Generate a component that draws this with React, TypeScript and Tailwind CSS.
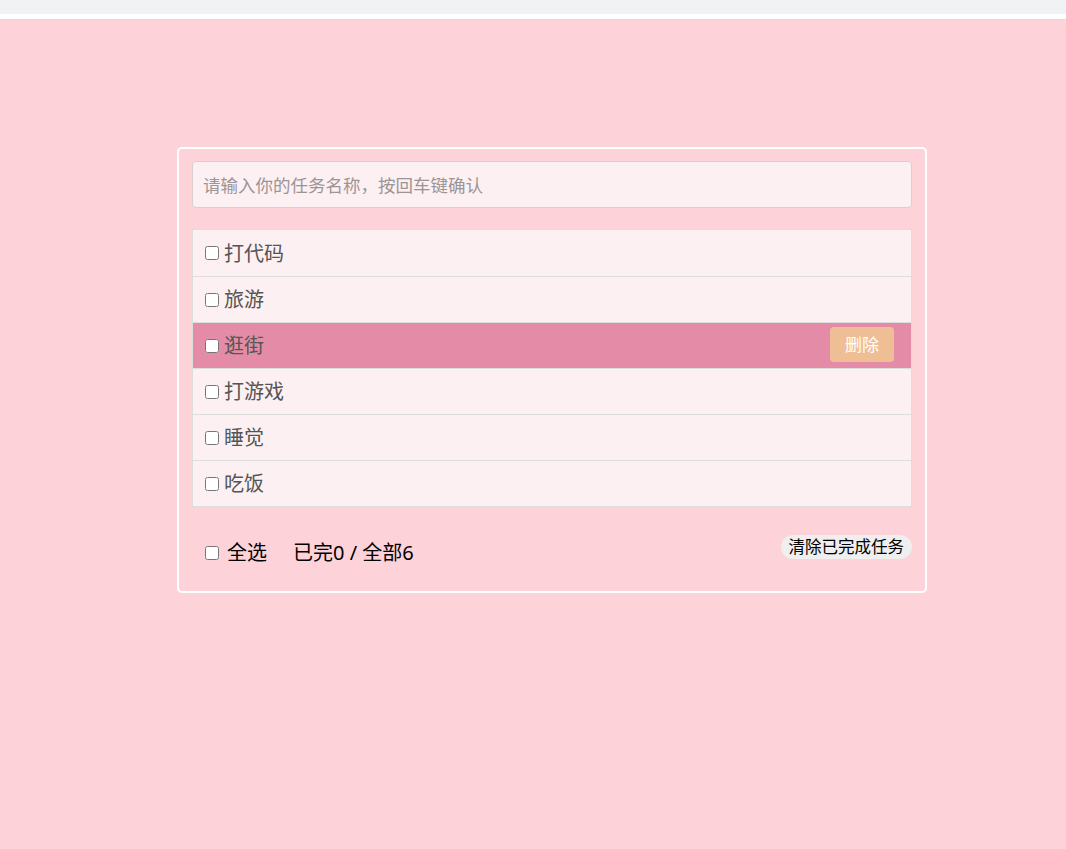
import { useState } from 'react';

const todos = ['打代码', '旅游', '逛街', '打游戏', '睡觉', '吃饭'];

export default function App() {
  const [hover, setHover] = useState(2);

  return (
    <div
      className="min-h-[849px] bg-[#fdd2d8]"
      style={{ fontFamily: '"Noto Sans", "Noto Sans CJK SC", sans-serif' }}
    >
      {/* browser bar */}
      <div className="h-[14px] bg-[#f1f2f4]" />
      <div className="h-[6px] bg-white border-b border-[#dcdcdc]" />

      <div className="pt-[127px] pl-[177px]">
        <div className="w-[750px] border-2 border-white rounded-[5px] px-[13px] pt-[12px] pb-[28px]">
          <input
            className="w-full h-[47px] bg-[#fcf0f2] border border-[#d9cfd2] rounded-[4px] px-[10px] text-[17.5px] text-[#555] placeholder:text-[#9d9496] outline-none"
            placeholder="请输入你的任务名称，按回车键确认"
          />

          <ul className="mt-[21px] border border-[#ddd] border-t-[#e6dadd]">
            {todos.map((t, i) => (
              <li
                key={t}
                onMouseEnter={() => setHover(i)}
                className={
                  'h-[46px] flex items-center pl-[12px] pr-[17px] ' +
                  (i > 0 ? 'border-t border-[#ddd] ' : '') +
                  (hover === i ? 'bg-[#e48ca7]' : 'bg-[#fcf0f2]')
                }
              >
                <input type="checkbox" className="w-[14px] h-[14px] m-0 mr-[5px]" />
                <span className="text-[20px] text-[#555] leading-none mt-[1px]">{t}</span>
                {hover === i && (
                  <button className="ml-auto -mt-[2px] h-[35px] w-[64px] bg-[#f0be94] rounded-[4px] text-white text-[17px] leading-none">
                    删除
                  </button>
                )}
              </li>
            ))}
          </ul>

          <div className="mt-[28px] flex items-start">
            <label className="flex items-center mt-[8px] pl-[13px] text-[20px] text-black leading-none">
              <input type="checkbox" className="w-[14px] h-[14px] m-0 mr-[8px]" />
              <span>全选</span>
              <span className="ml-[26px]">已完0 / 全部6</span>
            </label>
            <button className="ml-auto h-[24px] px-[8px] rounded-full bg-[#efefef] text-[16.5px] text-black leading-none">
              清除已完成任务
            </button>
          </div>
        </div>
      </div>
    </div>
  );
}
